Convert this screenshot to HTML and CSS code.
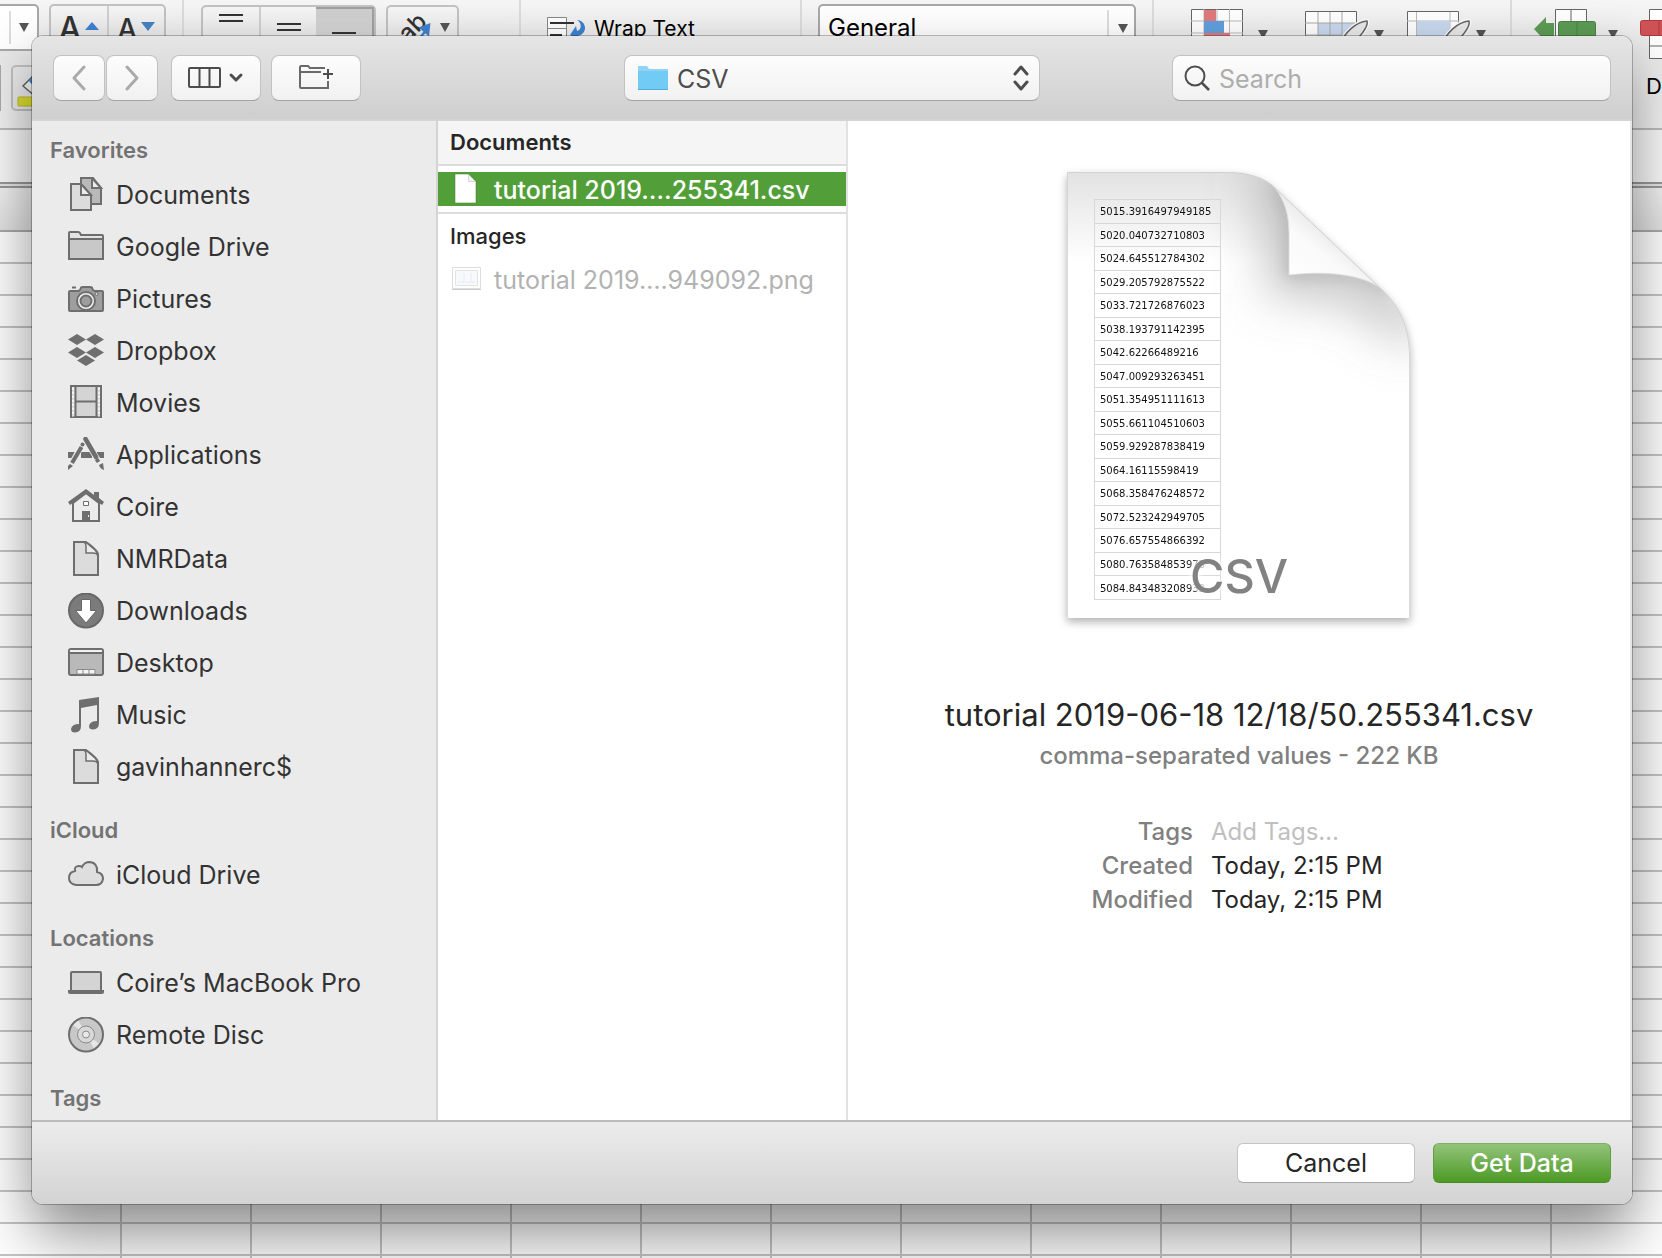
FILE: index.html
```html
<!DOCTYPE html>
<html lang="en">
<head>
<meta charset="utf-8">
<title>Get Data</title>
<link rel="stylesheet" href="styles.css">
</head>
<body>
<div class="workbook">
  <div class="ribbon">
    <div class="section section-font">
      <div class="ribbon-row">
        <button class="combo-end" aria-label="Font size list"><span class="combo-arrow"><svg width="10" height="9" viewBox="0 0 10 9"><path d="M0 0h10L5 9z" fill="#555"/></svg></span></button>
        <div class="group group-size">
          <button aria-label="Increase font size"><span class="big-a">A</span><svg width="14" height="8" viewBox="0 0 14 8"><path d="M0 8h14L7 0z" fill="#3d82d0"/></svg></button>
          <button aria-label="Decrease font size"><span class="small-a">A</span><svg width="14" height="9" viewBox="0 0 14 9"><path d="M0 0h14L7 9z" fill="#4683c4"/></svg></button>
        </div>
      </div>
      <div class="ribbon-row">
        <button class="stub" aria-label="Borders"></button>
        <button class="fill-button" aria-label="Fill color"><svg width="40" height="40" viewBox="0 0 40 40"><path d="M6 15L18 3l14 12-14 10z" fill="#f7f7f7" stroke="#666" stroke-width="1.5"/><path d="M12 10l6-7 9 9-8 6z" fill="#3d82d0"/><rect x="1" y="26" width="36" height="9" rx="1" fill="#e0df2f" stroke="#bdbb2c"/></svg></button>
      </div>
    </div>
    <div class="section section-align">
      <div class="group group-align">
        <button aria-label="Top align"><svg width="24" height="26" viewBox="0 0 24 26"><path d="M0 8h24M0 14h24" stroke="#333" stroke-width="2"/></svg></button>
        <button aria-label="Middle align"><svg width="24" height="26" viewBox="0 0 24 26"><path d="M0 17h24M0 23h24" stroke="#333" stroke-width="2"/></svg></button>
        <button class="pressed" aria-label="Bottom align"><svg width="24" height="26" viewBox="0 0 24 26"><path d="M0 24h24" stroke="#333" stroke-width="2"/></svg></button>
      </div>
      <button class="group orient" aria-label="Orientation"><svg width="72" height="46" viewBox="0 0 72 46"><text class="ab" transform="translate(22 38) rotate(-45)">ab</text><path d="M30 38L41 24M35 23l8-3-1 9z" stroke="#3d82d0" stroke-width="2.500" fill="#3d82d0"/><path d="M54 18h10l-5 9z" fill="#555"/></svg></button>
    </div>
    <div class="section section-wrap">
      <button class="plain"><svg width="39" height="32" viewBox="0 0 39 32"><path d="M.5 31V1.500h19V31M0 12.500h19" fill="#fff" stroke="#888"/><path d="M3 7h24M3 19h12" stroke="#333" stroke-width="2"/><path d="M30 4c4 0 8 3 8 8 0 4-3 7-7 8v4l-8-5 6-9 1 5c5-1 5-8 0-11z" fill="#3d82d0"/></svg><span>Wrap Text</span></button>
    </div>
    <div class="section section-number">
      <select class="number-format" aria-label="Number format"><option>General</option></select>
      <span class="number-arrow"><svg width="10" height="9" viewBox="0 0 10 9"><path d="M0 0h10L5 9z" fill="#555"/></svg></span>
    </div>
    <div class="section section-styles">
      <button class="tool" aria-label="Conditional formatting"><svg width="92" height="46" viewBox="0 0 92 46"><path d="M.5 46V.5h51V46" fill="#fff" stroke="#666"/><path d="M13 0v46M26 0v46M38.500 0v46M0 12h52M0 24h52" stroke="#bbb"/><path d="M13 1h12v11H13zM13 24h26v20H13z" fill="#e07a7c"/><path d="M13 12h20v12H13z" fill="#61a0dd"/><path d="M67 21h10l-5 9z" fill="#555"/></svg></button>
      <button class="tool" aria-label="Format as table"><svg width="80" height="46" viewBox="0 0 80 46"><path d="M.5 46V2.500h51V46" fill="#fff" stroke="#666"/><path d="M13 14h38v30H13z" fill="#c9d9ee"/><path d="M13 3v43M25 3v43M37 3v43M0 14h52M0 26h52" stroke="#aaa"/><path d="M34 36c6-12 16-23 28-24 2 5-8 19-22 28z" fill="#e9e9e9" stroke="#fff" stroke-width="4"/><path d="M34 36c6-12 16-23 28-24 2 5-8 19-22 28z" fill="#e9e9e9" stroke="#666" stroke-width="1.500"/><path d="M69 21h10l-5 9z" fill="#555"/></svg></button>
      <button class="tool" aria-label="Cell styles"><svg width="80" height="46" viewBox="0 0 80 46"><path d="M.5 46V2.500h51V46" fill="#fff" stroke="#666"/><path d="M9.500 3v43M43 3v43M0 12h52" stroke="#bbb"/><path d="M10 12h33v32H10z" fill="#c9d9ee"/><path d="M34 36c6-12 16-23 28-24 2 5-8 19-22 28z" fill="#e9e9e9" stroke="#fff" stroke-width="4"/><path d="M34 36c6-12 16-23 28-24 2 5-8 19-22 28z" fill="#e9e9e9" stroke="#666" stroke-width="1.500"/><path d="M69 21h10l-5 9z" fill="#555"/></svg></button>
    </div>
    <div class="section section-cells">
      <button class="tool" aria-label="Insert"><svg width="84" height="46" viewBox="0 0 84 46"><path d="M21.500 46V.5h31V46M37 0v12" fill="#fff" stroke="#666"/><path d="M0 20L12 8v6h8v14h-8v5z" fill="#5d9c55"/><rect x="24.500" y="12.500" width="37" height="16" rx="2" fill="#5d9c55" stroke="#47853f"/><path d="M43 13v15" stroke="#47853f"/><path d="M74 21h10l-5 9z" fill="#555"/></svg></button>
      <button class="tool tool-delete"><svg width="60" height="52" viewBox="0 0 60 52"><path d="M9.500 .5h40v49h-40zM9 37h40M29 0v50" fill="#fff" stroke="#666"/><rect x=".5" y="11.500" width="58" height="15" rx="2" fill="#cf5356" stroke="#b2383b"/><path d="M19 12v14" stroke="#b2383b"/></svg><span>Delete</span></button>
    </div>
  </div>
  <div class="formula-bar"></div>
  <div class="column-heads"></div>
  <div class="cells"></div>
</div>

<main class="dialog">
  <header class="toolbar">
    <div class="tools">
      <div class="history">
        <button class="tb-button" aria-label="Back"><svg width="14" height="26" viewBox="0 0 14 26"><path d="M12 2L2 13l10 11" fill="none" stroke="#aaa" stroke-width="3" stroke-linecap="round" stroke-linejoin="round"/></svg></button>
        <button class="tb-button" aria-label="Forward"><svg width="14" height="26" viewBox="0 0 14 26"><path d="M2 2l10 11L2 24" fill="none" stroke="#aaa" stroke-width="3" stroke-linecap="round" stroke-linejoin="round"/></svg></button>
      </div>
      <button class="tb-button wide" aria-label="View"><svg width="56" height="22" viewBox="0 0 56 22"><rect x="1" y="1" width="31" height="19" rx="1" fill="none" stroke="#4d4d4d" stroke-width="2"/><path d="M11.500 1v19M21.500 1v19" stroke="#4d4d4d" stroke-width="2"/><path d="M43 8l5 5 5-5" fill="none" stroke="#4d4d4d" stroke-width="3" stroke-linecap="round" stroke-linejoin="round"/></svg></button>
      <button class="tb-button wide" aria-label="New folder"><svg width="36" height="30" viewBox="0 0 36 30"><path d="M27 5H12L10 3H3q-1 0-1 1v20q0 1 1 1h27v-7M2 9h21" fill="none" stroke="#6a6a6a" stroke-width="2"/><path d="M30 6v10M25 11h10" stroke="#4d4d4d" stroke-width="2"/></svg></button>
    </div>
    <div class="location">
      <svg class="location-folder" width="30" height="26" viewBox="0 0 30 26"><path d="M0 2q0-1 1-1h8l2 3h18q1 0 1 1v19H0z" fill="#8fd4f6"/><path d="M0 6h30v18q0 1-1 1H1q-1 0-1-1z" fill="#71cbf5"/><path d="M0 24.500h30" stroke="#55acd6"/></svg>
      <select aria-label="Location"><option>CSV</option></select>
      <svg class="location-arrows" width="16" height="26" viewBox="0 0 16 26"><path d="M2 9l6-7 6 7M2 17l6 7 6-7" fill="none" stroke="#4d4d4d" stroke-width="3" stroke-linecap="round" stroke-linejoin="round"/></svg>
    </div>
    <label class="search">
      <svg width="26" height="26" viewBox="0 0 26 26"><circle cx="11" cy="11" r="9.500" fill="none" stroke="#4d4d4d" stroke-width="2"/><path d="M18 18l7 7" stroke="#4d4d4d" stroke-width="2.500"/></svg>
      <input type="search" placeholder="Search" aria-label="Search">
    </label>
  </header>

  <div class="browser">
    <nav class="sidebar">
      <h2>Favorites</h2>
      <ul>
        <li><a href="#"><svg viewBox="0 0 36 36" fill="#dcdcdc" stroke="#6e6e6e" stroke-width="2"><path d="M13 1h12l8 10v16H13z" fill="#b9b9b9"/><path d="M24 1v10h9z" fill="#ececec"/><path d="M3 7h10l10 11v15H3z"/><path d="M13 7v11h10z" fill="#ececec"/></svg>Documents</a></li>
        <li><a href="#"><svg viewBox="0 0 36 36" fill="#e4e4e4" stroke="#6e6e6e" stroke-width="2"><path d="M1 29V4q0-1 1-1h8q2 0 3 3h21q1 0 1 1v22q0 1-1 1H2q-1 0-1-1z"/><path d="M1 10h34v20H1z" fill="#c8c8c8"/></svg>Google Drive</a></li>
        <li><a href="#"><svg viewBox="0 0 36 36" fill="#9e9e9e" stroke="#6e6e6e" stroke-width="2"><path d="M4 6.500h4"/><path d="M1 29V11q0-1 1-1h8q2 0 3-3 0-1 2-1h7q2 0 2 1 1 3 3 3h7q1 0 1 1v18q0 1-1 1H2q-1 0-1-1z"/><circle cx="18" cy="20" r="9" fill="#f0f0f0"/><circle cx="18" cy="20" r="5.500"/><circle cx="28.500" cy="13" r="1.500" fill="#ddd" stroke-width="1"/></svg>Pictures</a></li>
        <li><a href="#"><svg viewBox="0 0 36 36" fill="#6e6e6e"><path d="M0 6.500L9 1l9 5.500L9 12zM18 6.500L27 1l9 5.500-9 5.500zM0 19.500L9 14l9 5.500L9 25zM18 19.500l9-5.500 9 5.500-9 5.500zM9 27.500l9-5.500 9 5.500-9 5.500z"/></svg>Dropbox</a></li>
        <li><a href="#"><svg viewBox="0 0 36 36" fill="#d4d4d4" stroke="#6e6e6e" stroke-width="2"><path d="M3 1h30v31H3z"/><path d="M7.500 1v31M28.500 1v31M8 16.500h20"/><path d="M5 2.500v29M31 2.500v29" stroke="#f4f4f4" stroke-dasharray="2.500 1.500" stroke-width="2"/></svg>Movies</a></li>
        <li><a href="#"><svg viewBox="0 0 36 36" fill="none" stroke="#6e6e6e"><path d="M0 18h8M13 18h11M29 18h7" stroke-width="6"/><path d="M15 6L3 28" stroke="#ececec" stroke-width="6"/><path d="M17 2l14 23" stroke="#ececec" stroke-width="6"/><path d="M13.500 10L4 26" stroke-width="4"/><circle cx="14.500" cy="7.500" r="2" fill="#6e6e6e" stroke="none"/><path d="M17.500 2L28 20" stroke-width="4.500" stroke-linecap="round"/><path d="M28.500 22l2 3" stroke-width="4"/><path d="M0 33v-4l2-2 3 2zM36 33l-1-7-4 2q1 4 5 5z" fill="#6e6e6e" stroke="none"/></svg>Applications</a></li>
        <li><a href="#"><svg viewBox="0 0 36 36"><path d="M5 14L18 4l13 10v18H5z" fill="#ececec" stroke="#6e6e6e" stroke-width="2"/><path d="M0 13L18 0l8 6V3h5v6l5 4-2 3L18 5 2 16zM14 22h8v10h-8z" fill="#6e6e6e"/><path d="M15.500 12.500h5v4h-5z" fill="#fff" stroke="#6e6e6e"/><path d="M20.500 26v2" stroke="#eee"/></svg>Coire</a></li>
        <li><a href="#"><svg viewBox="0 0 36 36" fill="#dcdcdc" stroke="#6e6e6e" stroke-width="2"><path d="M6 1h12q13 9 12 13v20H6z"/><path d="M16 1q2 1 2 4v7h7q4 0 5 3 0-3-3-6l-7-6q-2-2-4-2z" fill="#ececec" stroke-width="1.500"/></svg>NMRData</a></li>
        <li><a href="#"><svg viewBox="0 0 36 36"><circle cx="18" cy="17.500" r="17" fill="#7b7b7b" stroke="#686868" stroke-width="2"/><path d="M13.500 6.500h9v11h6L18 30 7.500 17.500h6z" fill="#fff" stroke="#686868"/></svg>Downloads</a></li>
        <li><a href="#"><svg viewBox="0 0 36 36"><rect x="1" y="4" width="34" height="26" rx="2" fill="#b9b9b9" stroke="#6e6e6e" stroke-width="2"/><path d="M2 5h32v2H2z" fill="#f2f2f2"/><path d="M1 8h34" stroke="#6e6e6e" stroke-width="2"/><path d="M9 24.500h18V29H9z" fill="#f4f4f4" stroke="#8a8a8a"/><path d="M15 24v5M21 24v5" stroke="#8a8a8a"/></svg>Desktop</a></li>
        <li><a href="#"><svg viewBox="0 0 36 36" fill="#6e6e6e"><path d="M11 3L31 0v26q0 6-6 6.500-4 0-4-3.500 1-5 8-5V8l-16 3v18q0 6-6 6.500-4 0-4-3.500 1-5 8-5z"/></svg>Music</a></li>
        <li><a href="#"><svg viewBox="0 0 36 36" fill="#dcdcdc" stroke="#6e6e6e" stroke-width="2"><path d="M6 1h12q13 9 12 13v20H6z"/><path d="M16 1q2 1 2 4v7h7q4 0 5 3 0-3-3-6l-7-6q-2-2-4-2z" fill="#ececec" stroke-width="1.500"/></svg>gavinhannerc$</a></li>
      </ul>
      <h2>iCloud</h2>
      <ul>
        <li><a href="#"><svg viewBox="0 0 36 36"><path d="M8 28q-7-1-7-7 0-6 6-7-1-5 4-5 2 0 3 1 2-5 8-5 8 1 7 10 6 1 6 7-1 6-7 6z" fill="#dedede" stroke="#6e6e6e" stroke-width="2"/></svg>iCloud Drive</a></li>
      </ul>
      <h2>Locations</h2>
      <ul>
        <li><a href="#"><svg viewBox="0 0 36 36"><path d="M3 26V8q0-1 1-1h28q1 0 1 1v18z" fill="#d4d4d4" stroke="#6e6e6e" stroke-width="2"/><path d="M0 25h36v2q0 2-2 2H2q-2 0-2-2z" fill="#6e6e6e"/></svg>Coire’s MacBook Pro</a></li>
        <li><a href="#"><svg viewBox="0 0 36 36"><circle cx="18" cy="17.500" r="17" fill="#c8c8c8"/><path d="M18 17.500L5 8l5-5zM18 17.500l13 9-5 5z" fill="#e6e6e6"/><circle cx="18" cy="17.500" r="17" fill="none" stroke="#6e6e6e" stroke-width="2"/><circle cx="18" cy="17.500" r="8.500" fill="#d8d8d8" stroke="#8a8a8a"/><circle cx="18" cy="17.500" r="3.500" fill="#e8e8e8" stroke="#8a8a8a"/></svg>Remote Disc</a></li>
      </ul>
      <h2>Tags</h2>
    </nav>

    <section class="files">
      <h3 class="files-head">Documents</h3>
      <button class="file selected"><svg width="30" height="32" viewBox="0 0 30 32"><path d="M3 1h13l8 8v21H3z" fill="#fff" stroke="#3f7f2c" stroke-opacity=".5"/><path d="M16.500 1.500v7h7z" fill="#f4f4f4" stroke="#ccc" stroke-width=".8"/></svg><span>tutorial 2019….255341.csv</span></button>
      <h3 class="files-sub">Images</h3>
      <button class="file dimmed"><svg width="30" height="26" viewBox="0 0 30 26"><path d="M.5 1.500h28v21H.5z" fill="#fff" stroke="#ddd"/><path d="M0 23.500h29" stroke="#ccc"/><path d="M3.500 4.500h22v15h-22z" fill="#f8f9fa" stroke="#e4e4e4"/><path d="M6 16h6V7m1 9h6V7m0 9h4" fill="none" stroke="#e2edf5"/></svg><span>tutorial 2019….949092.png</span></button>
    </section>

    <section class="preview">
      <div class="sheet">
        <svg class="sheet-shape" width="343" height="446" viewBox="0 0 343 446">
          <defs>
            <linearGradient id="top" x1="0" y1="0" x2="0" y2="1"><stop offset="0" stop-color="#e2e2e2"/><stop offset="1" stop-color="#fff"/></linearGradient>
            <linearGradient id="flap" x1="0" y1="1" x2=".6" y2=".3"><stop offset="0" stop-color="#fff"/><stop offset=".6" stop-color="#fafafa"/><stop offset="1" stop-color="#dedede"/></linearGradient>
            <filter id="soft" x="-50%" y="-50%" width="200%" height="200%"><feGaussianBlur stdDeviation="26"/></filter>
            <filter id="tight" x="-50%" y="-50%" width="200%" height="200%"><feGaussianBlur stdDeviation="8"/></filter>
            <clipPath id="body"><path d="M0 0H160C182 0 198 6 208 16C219 30 222 45 222 61V103C260 99 290 100 312 115C332 132 343 155 343 185V446H0Z"/></clipPath>
          </defs>
          <g clip-path="url(#body)">
            <path d="M0 0h343v446H0z" fill="#fff"/>
            <path d="M0 0h343v90H0z" fill="url(#top)"/>
            <path d="M200 0C219 30 222 45 222 61V103C260 99 300 100 350 160" fill="none" stroke="#777" stroke-opacity=".55" stroke-width="36" filter="url(#soft)"/>
            <path d="M208 10C219 30 224 45 224 61V101C262 97 300 104 322 118" fill="none" stroke="#777" stroke-opacity=".45" stroke-width="8" filter="url(#tight)"/>
          </g>
          <path d="M208 16C219 30 222 45 222 61V103C265 98 295 104 312 115Z" fill="url(#flap)" stroke="#ddd" stroke-width=".8"/>
          <path d="M.5 446V.5H160C182 .5 198 6 208 16L312 115C332 132 342.500 155 342.500 185V446" fill="none" stroke="#ccc" stroke-opacity=".7"/>
        </svg>
        <table>
          <tr><td>5015.3916497949185</td></tr>
          <tr><td>5020.040732710803</td></tr>
          <tr><td>5024.645512784302</td></tr>
          <tr><td>5029.205792875522</td></tr>
          <tr><td>5033.721726876023</td></tr>
          <tr><td>5038.193791142395</td></tr>
          <tr><td>5042.62266489216</td></tr>
          <tr><td>5047.009293263451</td></tr>
          <tr><td>5051.354951111613</td></tr>
          <tr><td>5055.661104510603</td></tr>
          <tr><td>5059.929287838419</td></tr>
          <tr><td>5064.16115598419</td></tr>
          <tr><td>5068.358476248572</td></tr>
          <tr><td>5072.523242949705</td></tr>
          <tr><td>5076.657554866392</td></tr>
          <tr><td>5080.763584853973</td></tr>
          <tr><td>5084.843483208933</td></tr>
        </table>
        <span class="sheet-type">CSV</span>
      </div>
      <h1>tutorial 2019-06-18 12/18/50.255341.csv</h1>
      <p class="kind">comma-separated values - 222 KB</p>
      <dl>
        <dt><label for="tags">Tags</label></dt><dd><input id="tags" type="text" placeholder="Add Tags…"></dd>
        <dt>Created</dt><dd>Today, 2:15 PM</dd>
        <dt>Modified</dt><dd>Today, 2:15 PM</dd>
      </dl>
    </section>
  </div>

  <footer class="actions">
    <button class="action">Cancel</button>
    <button class="action primary">Get Data</button>
  </footer>
</main>
</body>
</html>
```
FILE: styles.css
```css
* { box-sizing: border-box; }

body {
  margin: 0;
  height: 100vh;
  overflow: hidden;
  position: relative;
  display: flex;
  padding: 36px 30px 54px 32px;
  font-family: Inter, "Liberation Sans", sans-serif;
  font-size: 25px;
  color: #262626;
  background: #fff;
}

button, input, select {
  font: inherit;
  color: inherit;
  margin: 0;
  padding: 0;
  border: 0;
  background: none;
  appearance: none;
  outline: 0;
}

svg { display: block; flex: none; }
h1, h2, h3, p, ul, dl, dd { margin: 0; padding: 0; }
ul { list-style: none; }

/* Workbook behind the dialog */
.workbook {
  position: absolute;
  inset: 0;
  display: flex;
  flex-direction: column;
  overflow: hidden;
  color: #000;
}

.ribbon {
  flex: none;
  display: flex;
  height: 130px;
  border-bottom: 2px solid #bcbcbc;
  background: linear-gradient(#f6f6f6, #e9e9e9 50px, #f4f4f4);
}

.section {
  flex: none;
  display: flex;
  align-items: flex-start;
  border-right: 2px solid #dcdcdc;
}

.section-font { width: 184px; flex-direction: column; padding-top: 4px; gap: 14px; }
.section-align { width: 337px; padding: 5px 0 0 17px; gap: 10px; }
.section-wrap { width: 281px; padding: 16px 0 0 26px; }
.section-number { width: 352px; padding: 4px 0 0 16px; }
.section-styles { width: 358px; padding: 9px 0 0 37px; gap: 22px; }
.section-cells { padding: 9px 0 0 22px; gap: 22px; border: 0; }

.ribbon-row { display: flex; gap: 10px; }

.combo-end {
  display: flex;
  justify-content: flex-end;
  width: 39px;
  height: 47px;
  padding: 5px 8px 5px 0;
  border: 2px solid #a8a8a8;
  border-left: 0;
  border-radius: 0 5px 5px 0;
  background: #fff;
}

.combo-arrow {
  display: flex;
  align-items: center;
  height: 100%;
  padding-left: 8px;
  border-left: 2px solid #ddd;
}

.group {
  display: flex;
  height: 47px;
  border: 2px solid #c2c2c2;
  border-radius: 5px;
  background: linear-gradient(#f6f6f6, #e4e4e4);
}

.group > button { flex: 1; display: flex; justify-content: center; }
.group > button + button { border-left: 2px solid #d0d0d0; }
.group .pressed { background: linear-gradient(#cecece, #dadada); border: 2px solid #a0a0a0; border-width: 2px 2px 0 0; }
.group-size { width: 117px; }
.group-size > button { gap: 4px; align-items: center; padding-top: 3px; }
.group-size svg { margin-bottom: 6px; }
.group-align { width: 175px; }
.orient { width: 73px; }
.orient svg { margin: -2px; }
.big-a { font-size: 32px; line-height: 40px; color: #333; font-weight: 500; }
.small-a { font-size: 28px; line-height: 40px; color: #333; font-weight: 500; }
.ab { font-size: 24px; font-weight: 500; fill: #333; }

.stub { width: 1px; height: 46px; background: #aaa; }
.fill-button { width: 70px; height: 46px; padding: 4px; border: 2px solid #c2c2c2; border-radius: 5px; background: #ececec; }

.plain { display: flex; gap: 8px; font-size: 21px; line-height: 26px; }
.number-format {
  width: 318px;
  height: 47px;
  padding: 0 8px;
  border: 2px solid #a8a8a8;
  border-radius: 5px;
  background: #fff;
  font-size: 24px;
}
.number-arrow { display: flex; align-items: center; height: 36px; margin: 6px 0 0 -29px; padding-left: 9px; border-left: 2px solid #ddd; }

.tool-delete { font-size: 22px; text-align: left; line-height: 26px; }
.tool-delete span { display: block; padding: 12px 0 0 6px; }

.formula-bar { flex: none; height: 58px; background: #fafafa; border-bottom: 2px solid #999; box-shadow: inset 0 -2px #e6e6e6, inset 0 -4px #999; }
.column-heads { flex: none; height: 44px; background: linear-gradient(#f2f2f2, #e2e2e2); border-bottom: 2px solid #aaa; }
.cells {
  flex: 1;
  background:
    repeating-linear-gradient(transparent 0 30px, #c4c4c4 30px 32px),
    repeating-linear-gradient(90deg, transparent 0 120px, #c4c4c4 120px 122px, transparent 122px 130px);
}

/* Open dialog */
.dialog {
  position: relative;
  flex: 1;
  display: flex;
  flex-direction: column;
  min-width: 0;
  overflow: hidden;
  border-radius: 11px;
  background: #ececec;
  box-shadow: 0 0 0 1px rgba(0, 0, 0, .25), 0 30px 60px rgba(0, 0, 0, .46);
}

.toolbar {
  flex: none;
  display: grid;
  grid-template-columns: 1fr 416px 1fr;
  align-items: center;
  height: 85px;
  padding: 0 21px;
  border-bottom: 2px solid #d4d4d4;
  background: linear-gradient(#e5e5e5, #cfcfcf);
}

.tools { display: flex; gap: 10px; }
.history { display: flex; gap: 1px; margin-right: 3px; }

.tb-button, .location, .search {
  height: 46px;
  border: 1px solid #c2c2c2;
  border-bottom-color: #a4a4a4;
  border-radius: 8px;
  background: linear-gradient(#fdfdfd, #f1f1f1);
}

.tb-button { display: flex; align-items: center; justify-content: center; width: 52px; }
.tb-button.wide { width: 90px; }

.location { display: flex; align-items: center; padding: 0 10px 0 13px; color: #4d4d4d; }
.location select { flex: 1; padding: 2px 0 0 9px; }

.search { justify-self: end; width: 439px; display: flex; align-items: center; gap: 9px; padding: 0 11px; }
.search input { flex: 1; min-width: 0; padding-top: 2px; }
.search input::placeholder { color: #adadad; opacity: 1; }

.browser { flex: 1; display: flex; min-height: 0; }

.sidebar {
  flex: none;
  width: 406px;
  padding-top: 10px;
  overflow: hidden;
  border-right: 2px solid #d4d4d4;
  background: #ebebeb;
}

.sidebar h2 { padding-left: 18px; font-size: 22px; line-height: 38px; font-weight: 600; color: #737373; }
.sidebar ul { margin-bottom: 18px; }
.sidebar a { display: flex; align-items: center; gap: 12px; height: 52px; padding-left: 36px; color: #333; text-decoration: none; }
.sidebar a svg { width: 36px; height: 36px; }

.files { flex: none; width: 410px; border-right: 2px solid #e2e2e2; background: #fff; }
.files h3 { padding-left: 12px; font-size: 22px; }
.files-head { line-height: 43px; font-weight: 600; background: #f5f5f5; border-bottom: 2px solid #dcdcdc; }
.files-sub { margin-top: 6px; line-height: 44px; font-weight: 500; border-top: 2px solid #dcdcdc; }
.file { display: flex; align-items: center; gap: 12px; width: 100%; height: 34px; padding-left: 14px; text-align: left; white-space: nowrap; }
.file span { padding-top: 2px; }
.file.selected { margin-top: 6px; background: #529f3a; color: #fff; font-weight: 500; }
.file.dimmed { margin-top: 4px; color: #b2b2b2; }

.preview { flex: 1; min-width: 0; padding-top: 51px; display: flex; flex-direction: column; align-items: center; border-right: 2px solid #e6e6e6; background: #fff; }

.sheet { position: relative; width: 344px; height: 446px; padding: 27px; filter: drop-shadow(0 4px 4px rgba(0, 0, 0, .3)); }
.sheet-shape { position: absolute; inset: 0; }
.sheet table { position: relative; width: 127px; height: 401px; border-collapse: collapse; font-family: "DejaVu Sans", sans-serif; font-size: 10px; line-height: 12px; color: #111; }
.sheet td { padding: 2px 5px 0; border: 1px solid #d8d8d8; }
.sheet-type { position: absolute; left: 0; right: 0; bottom: 14px; text-align: center; font-size: 47px; line-height: 56px; font-weight: 500; color: #828282; text-shadow: 0 0 4px #fff, 0 0 6px #fff, 0 0 8px #fff; }

.preview h1 { margin-top: 77px; font-size: 31px; line-height: 40px; font-weight: 400; white-space: nowrap; }
.kind { margin-top: 6px; font-size: 24px; line-height: 30px; font-weight: 500; color: #808080; }
.preview dl { align-self: stretch; display: grid; grid-template-columns: 345fr 419fr; column-gap: 18px; margin-top: 44px; font-size: 24px; line-height: 34px; }
.preview dt { text-align: right; font-weight: 500; color: #808080; }
.preview dd { height: 34px; }
.preview dd input { width: 200px; height: 34px; }
.preview dd input::placeholder { color: #bfbfbf; opacity: 1; }

.actions {
  flex: none;
  display: flex;
  justify-content: flex-end;
  align-items: center;
  gap: 18px;
  height: 84px;
  padding-right: 21px;
  border-top: 2px solid #bcbcbc;
  background: linear-gradient(#ececec, #d3d3d3);
}

.action { width: 178px; height: 40px; border: 1px solid #c4c4c4; border-bottom-color: #a6a6a6; border-radius: 6px; background: #fff; }
.action.primary { border-color: #7fb066 #5ea03f #468f24; background: linear-gradient(#93c37b, #4c9a24); color: #fff; font-weight: 500; }
```
